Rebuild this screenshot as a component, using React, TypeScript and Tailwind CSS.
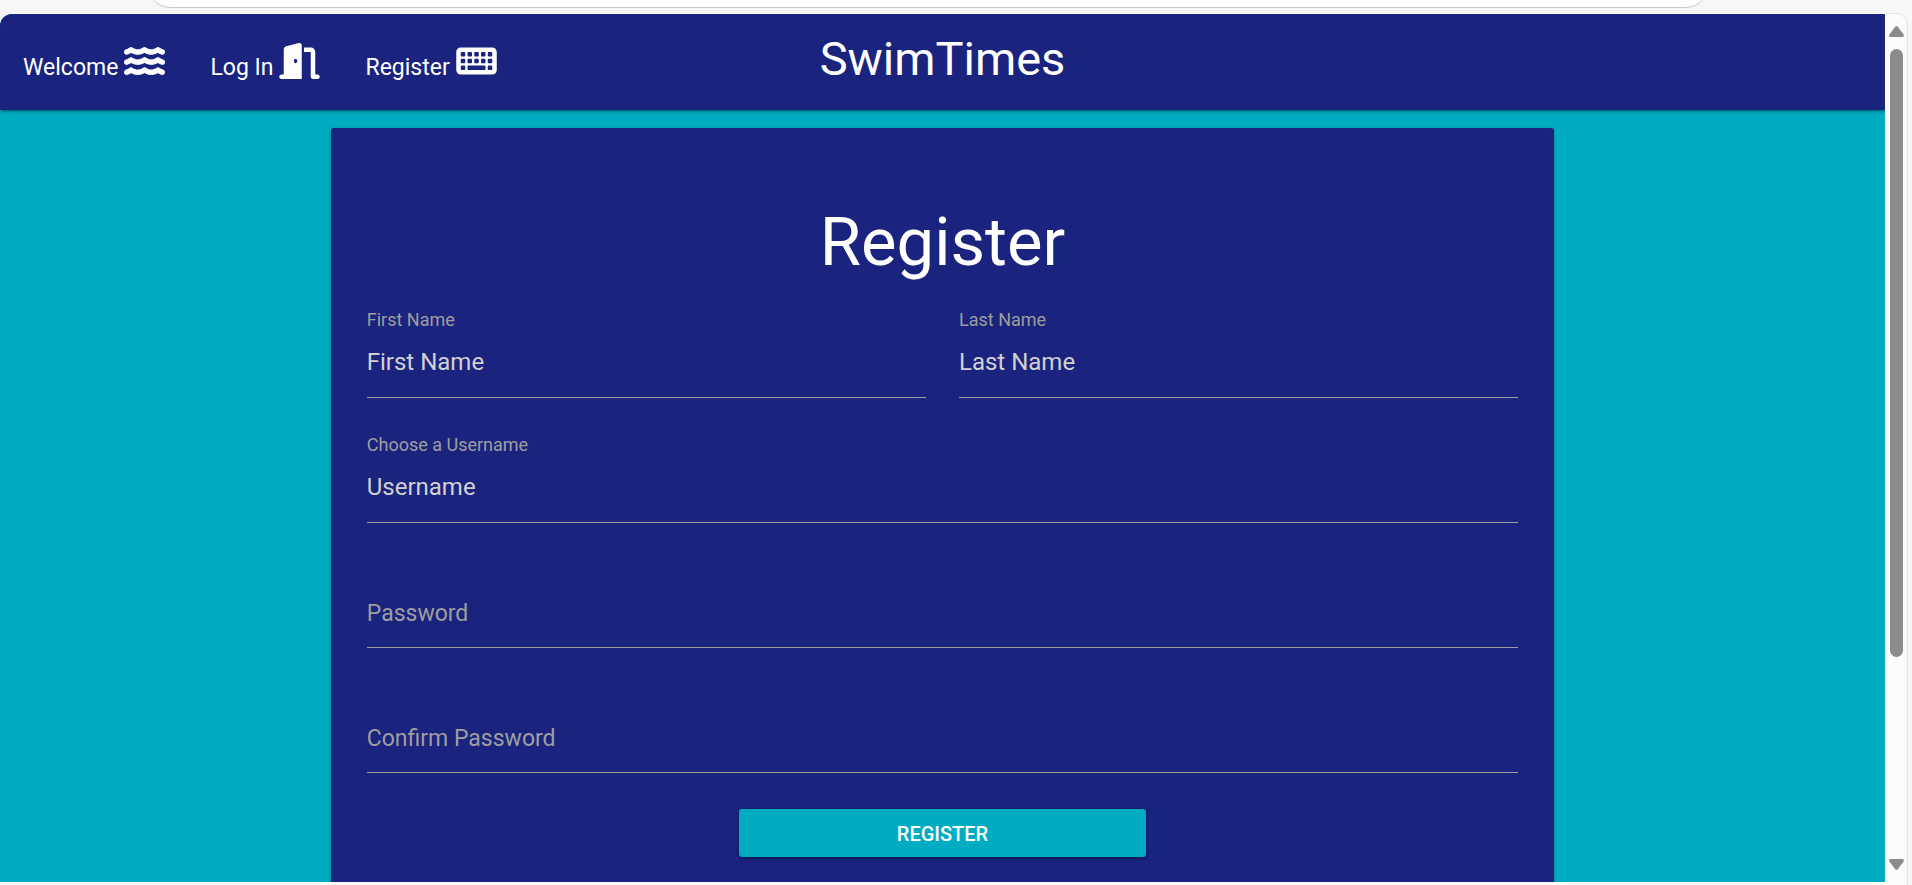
import React from "react";
import { FaDoorOpen, FaKeyboard, FaWater } from "react-icons/fa6";
import type { IconType } from "react-icons";

type NavItem = { label: string; icon: IconType; stroke: number };

const navItems: NavItem[] = [
  { label: "Welcome", icon: FaWater, stroke: 14 },
  { label: "Log In", icon: FaDoorOpen, stroke: 0 },
  { label: "Register", icon: FaKeyboard, stroke: 0 },
];

function NavBar() {
  return (
    <nav className="relative grid h-24 shrink-0 grid-cols-[1fr_auto_1fr] items-baseline bg-[#1a237e] pt-2 text-white shadow-[0_2px_2px_0_rgba(0,0,0,0.14),0_3px_1px_-2px_rgba(0,0,0,0.12),0_1px_5px_0_rgba(0,0,0,0.2)]">
      <ul className="flex items-baseline">
        {navItems.map(({ label, icon: Icon, stroke }) => (
          <li key={label}>
            <a href="#" className="flex items-baseline gap-1.5 pr-[22px] pl-[23px] text-[23px] leading-9">
              <span>{label}</span>
              <Icon className="h-9 w-[41px] translate-y-1" strokeWidth={stroke} aria-hidden="true" />
            </a>
          </li>
        ))}
      </ul>
      <a href="#" className="text-[47px] leading-[74px]">
        SwimTimes
      </a>
    </nav>
  );
}

type FieldProps = {
  id: string;
  label: string;
  placeholder?: string;
  type?: string;
};

function Field({ id, label, placeholder, type = "text" }: FieldProps) {
  const raised = Boolean(placeholder);
  return (
    <div className="relative flex-1 pt-6">
      <label
        htmlFor={id}
        className={
          raised
            ? "absolute top-0 left-0 text-[18px] leading-6 text-[#9e9e9e]"
            : "absolute top-[38px] left-0 text-[23px] leading-9 text-[#9e9e9e]"
        }
      >
        {label}
      </label>
      <input
        id={id}
        type={type}
        placeholder={placeholder}
        className="block h-[66px] w-full border-b border-[#9e9e9e] bg-transparent pb-1.5 text-2xl text-white outline-none placeholder:text-[#d1d1d1]"
      />
    </div>
  );
}

function RegisterCard() {
  return (
    <section className="rounded-[3px] bg-[#1a237e] px-9 pt-[74px] pb-24 shadow-[0_2px_2px_0_rgba(0,0,0,0.14),0_3px_1px_-2px_rgba(0,0,0,0.12),0_1px_5px_0_rgba(0,0,0,0.2)]">
      <h1 className="mb-[26px] text-center text-[67px] leading-[80px] text-white">Register</h1>
      <form className="flex flex-col">
        <div className="mb-[35px] flex gap-[33px]">
          <Field id="first-name" label="First Name" placeholder="First Name" />
          <Field id="last-name" label="Last Name" placeholder="Last Name" />
        </div>
        <div className="mb-9 flex flex-col gap-[35px]">
          <Field id="username" label="Choose a Username" placeholder="Username" />
          <Field id="password" label="Password" type="password" />
          <Field id="confirm-password" label="Confirm Password" type="password" />
        </div>
        <button
          type="button"
          className="h-12 w-[35.4%] self-center rounded-[3px] bg-[#00acc1] pt-0.5 text-xl font-medium text-white uppercase shadow-[0_2px_2px_0_rgba(0,0,0,0.14),0_3px_1px_-2px_rgba(0,0,0,0.12),0_1px_5px_0_rgba(0,0,0,0.2)]"
        >
          Register
        </button>
      </form>
    </section>
  );
}

function ScrollBar() {
  return (
    <div className="flex w-[23px] shrink-0 flex-col items-center rounded-tr-xl border-t border-r border-[#e6e6e6] bg-[#fcfcfc] pt-3 pb-[15px]" aria-hidden="true">
      <svg className="h-[11px] w-[15px] fill-[#8b8b8b]" viewBox="0 0 15 11">
        <path d="M6.2 .8Q7.5-.8 8.8.8L14.6 8.6Q15.4 11 13.4 11H1.6Q-.4 11 .4 8.6Z" />
      </svg>
      <div className="mt-3 flex min-h-0 w-[13px] flex-1 flex-col">
        <div className="h-3/4 rounded-full bg-[#8b8b8b]" />
      </div>
      <svg className="h-[11px] w-[15px] fill-[#8b8b8b]" viewBox="0 0 15 11">
        <path d="M6.2 10.2Q7.5 11.8 8.8 10.2L14.6 2.4Q15.4 0 13.4 0H1.6Q-.4 0 .4 2.4Z" />
      </svg>
    </div>
  );
}

export default function App() {
  return (
    <div className="flex h-screen flex-col overflow-hidden bg-[#f7f7f7] font-[Roboto,sans-serif]">
      <div className="flex h-[13px] shrink-0 items-start pr-[203px] pl-[147px]">
        <div className="h-2 flex-1 overflow-hidden">
          <div className="-mt-10 h-12 rounded-[28px] border-b border-[#c8c8c8] bg-white" />
        </div>
      </div>
      <div className="flex min-h-0 flex-1 pr-1">
        <div className="flex min-w-0 flex-1 flex-col overflow-hidden rounded-tl-xl bg-[#fcfcfc] pt-px pb-[3px]">
          <div className="flex min-h-0 flex-1 flex-col overflow-hidden rounded-tl-xl bg-[#00acc1]">
            <NavBar />
            <main className="mx-auto w-[70%] px-12 pt-[18px]">
              <RegisterCard />
            </main>
          </div>
        </div>
        <ScrollBar />
      </div>
    </div>
  );
}
